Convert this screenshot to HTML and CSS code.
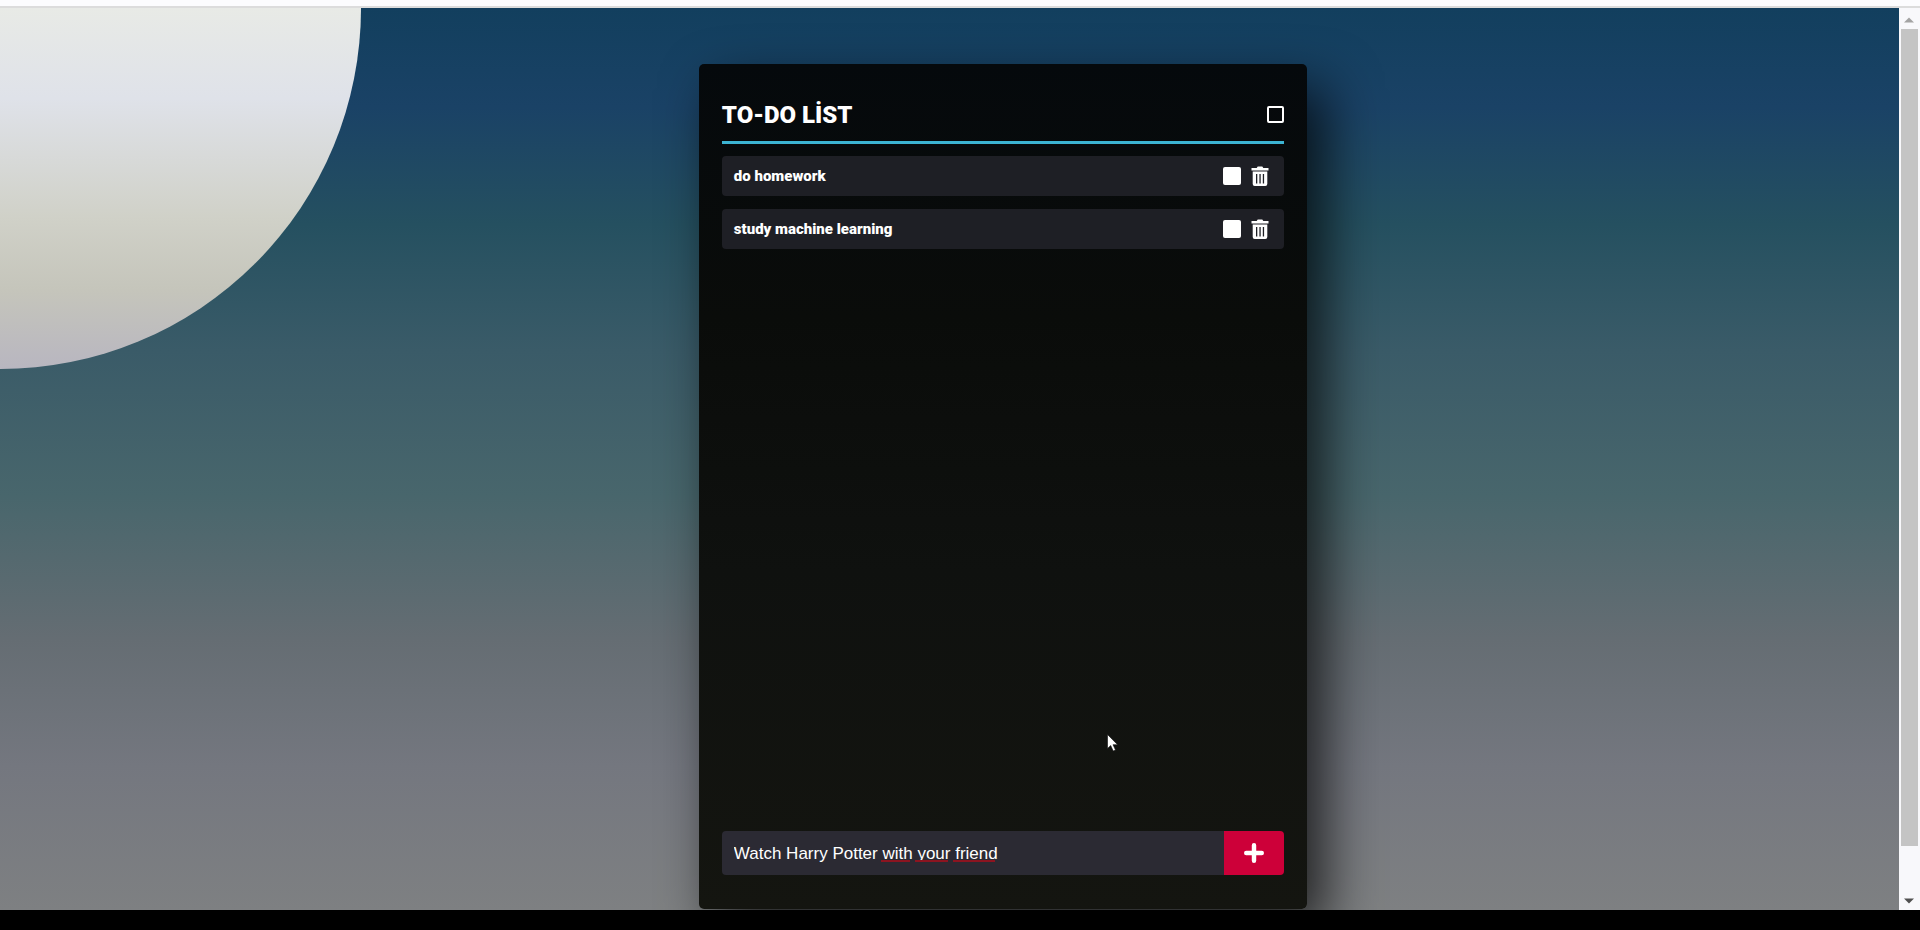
FILE: index.html
```html
<!DOCTYPE html>
<html lang="en">
<head>
<meta charset="utf-8">
<title>To-Do List</title>
<link rel="stylesheet" href="styles.css">
</head>
<body>
<div class="top-strip"></div>
<div class="viewport">
  <main class="page">
    <section class="card">
      <header class="card-header">
        <h1 class="title">TO-DO LİST</h1>
        <input class="check-all" type="checkbox" aria-label="Mark all as done">
      </header>
      <ul class="tasks">
        <li class="task">
          <label class="task-name" for="task-1">do homework</label>
          <input class="task-check" id="task-1" type="checkbox">
          <button class="delete" type="button" aria-label="Delete do homework">
            <svg class="icon" viewBox="0 0 18 20"><path fill="#fff" d="M.5 2h5.200l1-1.500h4.600l1 1.500h5.200v2.500H.5z"/><path fill="#fff" fill-rule="evenodd" d="M1.700 5.500h14.600v12.500q0 2-2 2H3.700q-2 0-2-2zM5 8v9.500h1.300V8zm3.400 0v9.500h1.300V8zm3.400 0v9.500h1.300V8z"/></svg>
          </button>
        </li>
        <li class="task">
          <label class="task-name" for="task-2">study machine learning</label>
          <input class="task-check" id="task-2" type="checkbox">
          <button class="delete" type="button" aria-label="Delete study machine learning">
            <svg class="icon" viewBox="0 0 18 20"><path fill="#fff" d="M.5 2h5.200l1-1.500h4.600l1 1.500h5.200v2.500H.5z"/><path fill="#fff" fill-rule="evenodd" d="M1.700 5.500h14.600v12.500q0 2-2 2H3.700q-2 0-2-2zM5 8v9.500h1.300V8zm3.400 0v9.500h1.300V8zm3.400 0v9.500h1.300V8z"/></svg>
          </button>
        </li>
      </ul>
      <form class="add-form">
        <div class="field">
          <input class="new-task" type="text" aria-label="New task" value="Watch Harry Potter with your friend" spellcheck="false">
          <div class="spelling" aria-hidden="true">
            <span class="mark mark-short"></span><span class="mark mark-medium"></span><span class="mark mark-long"></span>
          </div>
        </div>
        <button class="add" type="button" aria-label="Add task">
          <svg class="plus" viewBox="0 0 18 18"><path d="M9 2v14M2 9h14" stroke="#fff" stroke-width="4" stroke-linecap="round"/></svg>
        </button>
      </form>
    </section>
    <svg class="cursor" viewBox="0 0 12 19" aria-hidden="true"><path fill="#fff" stroke="#111" stroke-width=".6" d="M.5.5v14l3.200-3 2.500 5.500 2.300-1-2.500-5.300h4.600z"/></svg>
  </main>
  <div class="scrollbar" aria-hidden="true">
    <svg class="arrow" viewBox="0 0 10 6"><path fill="#a3a3a3" d="M0 5.500 5 .5l5 5z"/></svg>
    <div class="track"><div class="thumb"></div></div>
    <svg class="arrow" viewBox="0 0 10 6"><path fill="#505050" d="M0 .5h10l-5 5z"/></svg>
  </div>
</div>
<div class="bottom-strip"></div>
</body>
</html>
```
FILE: styles.css
```css
* { box-sizing: border-box; }

body {
  margin: 0;
  height: 100vh;
  display: flex;
  flex-direction: column;
  overflow: hidden;
  background: #000;
  font-family: Roboto, "Liberation Sans", sans-serif;
  color: #fff;
}

.top-strip {
  height: 8px;
  background: #fcfcfe;
  border-bottom: 2px solid #dcdcdc;
}

.bottom-strip { height: 20px; background: #000; }

.viewport {
  flex: 1;
  min-height: 0;
  display: flex;
}

.page {
  position: relative;
  flex: 1;
  display: flex;
  overflow: hidden;
  padding: 56px 0 1px;
  background: linear-gradient(#123f5e, #1a4266 11%, #255060 24%, #3a5b68 38%, #48666c 54%, #656d73 70%, #74777f 84%, #7e8082);
}

.page::before {
  content: "";
  position: absolute;
  top: 0;
  left: 0;
  width: 19%;
  aspect-ratio: 1;
  border-radius: 0 0 100% 0;
  background: linear-gradient(#e8eae6, #dfe2e9 25%, #d0d1c8 58%, #c5c5bb 78%, #b8b6c0);
}

.card {
  position: relative;
  width: 32%;
  margin-left: 36.8%;
  display: flex;
  flex-direction: column;
  padding: 23px 23px 34px;
  border-radius: 5px;
  background: linear-gradient(#05090c, #0a0c0a 30%, #0f110f 60%, #141510);
  box-shadow: 18px 24px 54px rgba(0, 0, 0, .75);
}

.card-header {
  display: flex;
  align-items: center;
  justify-content: space-between;
  height: 57px;
  border-bottom: 3px solid #3cb4d2;
}

.title {
  margin: 0;
  padding-top: 2px;
  font-size: 24px;
  line-height: 30px;
  font-weight: 900;
}

.check-all,
.task-check {
  appearance: none;
  margin: 0;
  border-radius: 2px;
}

.check-all {
  width: 17px;
  height: 17px;
  border: 2px solid #fff;
}

.tasks {
  flex: 1;
  margin: 12px 0 0;
  padding: 0;
  list-style: none;
  display: flex;
  flex-direction: column;
  gap: 13px;
}

.task {
  display: flex;
  align-items: center;
  height: 40px;
  padding: 0 15px 0 12px;
  border-radius: 4px;
  background: #1e1f25;
}

.task-name {
  flex: 1;
  font-size: 15px;
  line-height: 20px;
  font-weight: 900;
}

.task-check {
  width: 18px;
  height: 18px;
  background: #fff;
}

.delete {
  margin-left: 10px;
  padding: 0;
  border: 0;
  background: none;
  display: flex;
}

.icon { width: 18px; height: 20px; }

.add-form {
  display: flex;
  height: 44px;
  border-radius: 4px;
  overflow: hidden;
}

.field { position: relative; flex: 1; display: flex; }

.new-task {
  flex: 1;
  padding: 1px 12px 0;
  border: 0;
  outline: 0;
  background: #2b2a33;
  color: #fff;
  font: 17px "Liberation Sans", sans-serif;
}

.spelling {
  position: absolute;
  left: 159px;
  top: 29px;
  display: flex;
  gap: 5px;
}

.mark { height: 2px; background: #8c1420; }
.mark-short { width: 29px; }
.mark-medium { width: 33px; }
.mark-long { width: 42px; }

.add {
  width: 60px;
  padding: 0;
  border: 0;
  background: #cd0039;
  display: flex;
  align-items: center;
  justify-content: center;
}

.plus { width: 20px; height: 20px; }

.cursor {
  position: absolute;
  left: 1107px;
  top: 726px;
  width: 12px;
  height: 19px;
}

.scrollbar {
  width: 21px;
  display: flex;
  flex-direction: column;
  align-items: center;
  padding: 9px 2px 6px 0;
  background: #f8f8fb;
}

.arrow { width: 10px; height: 6px; }

.track {
  flex: 1;
  align-self: stretch;
  padding: 6px 0 0 2px;
}

.thumb { height: 94%; background: #c4c4c4; }
```
